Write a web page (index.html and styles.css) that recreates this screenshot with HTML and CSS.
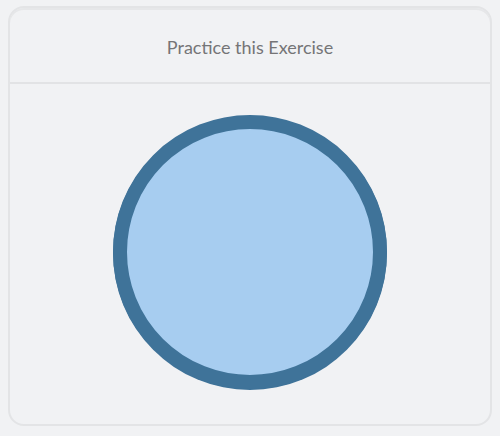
FILE: index.html
```html
<!DOCTYPE html>
<html>
<head>
<meta charset="utf-8">
<link rel="stylesheet" href="styles.css">
</head>
<body>
<div class="card">
  <div class="card-header">Practice this Exercise</div>
  <div class="card-body">
    <div class="circle"></div>
  </div>
</div>
</body>
</html>
```
FILE: styles.css
```css
html, body {
  margin: 0;
  padding: 0;
  background: #f1f2f4;
}
body {
  font-family: Lato, "Open Sans", sans-serif;
}
.card {
  box-sizing: border-box;
  margin: 6px 8px 0 8px;
  width: 484px;
  height: 420px;
  border: 2px solid #e3e4e6;
  border-radius: 16px;
  box-shadow: inset 0 2px 0 #e6e7e9;
  background: #f1f2f4;
  display: flex;
  flex-direction: column;
}
.card-header {
  box-sizing: border-box;
  height: 76px;
  border-bottom: 2px solid #e2e3e5;
  display: flex;
  align-items: center;
  justify-content: center;
  font-size: 18px;
  color: #757577;
  padding-top: 3px;
}
.card-body {
  display: flex;
  justify-content: center;
  padding-top: 31px;
}
.circle {
  box-sizing: border-box;
  width: 274px;
  height: 274px;
  border-radius: 50%;
  background: #a7cdf0;
  border: 14px solid #3f7399;
  box-shadow: 0 1px 0 #3f7399;
}
```
